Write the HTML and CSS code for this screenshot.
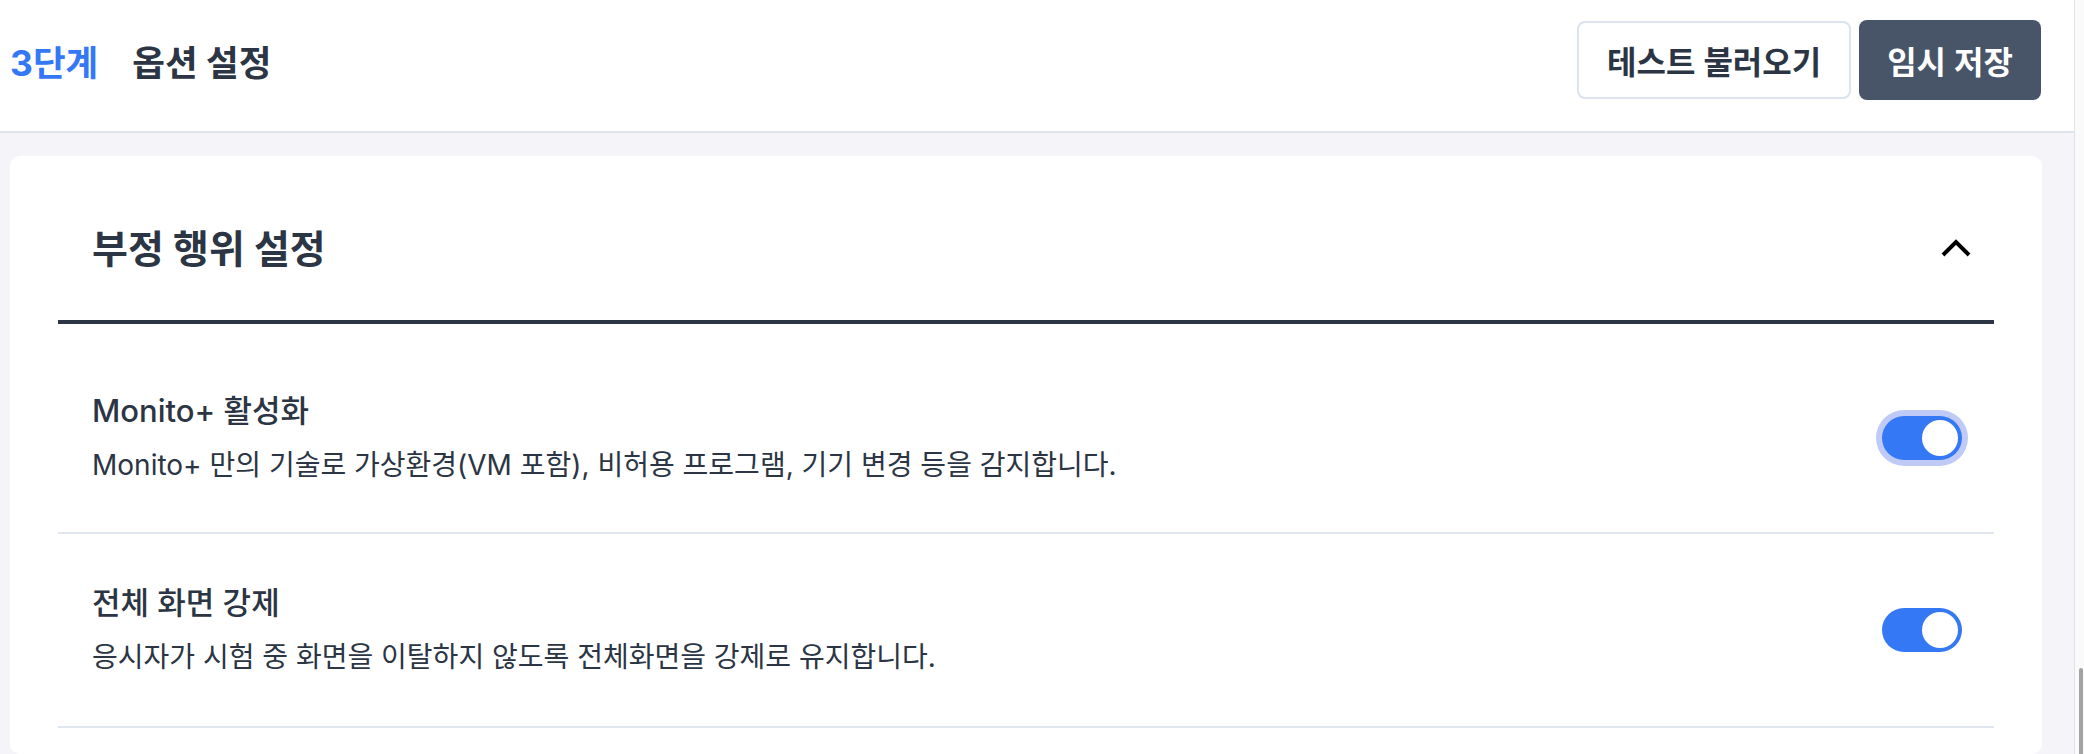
FILE: index.html
```html
<!DOCTYPE html>
<html lang="ko">
<head>
<meta charset="utf-8">
<title>옵션 설정</title>
<link rel="stylesheet" href="styles.css">
</head>
<body>
<div class="app">
  <div class="main">
    <header class="topbar">
      <div class="step">
        <span class="step-num">3단계</span>
        <span class="step-name">옵션 설정</span>
      </div>
      <div class="actions">
        <button class="btn btn-outline">테스트 불러오기</button>
        <button class="btn btn-dark">임시 저장</button>
      </div>
    </header>
    <section class="card">
      <div class="card-head">
        <h2 class="card-title">부정 행위 설정</h2>
        <svg class="chevron" width="30" height="20" viewBox="0 0 30 20"><polyline points="2,17 15,4 28,17" fill="none" stroke="#000" stroke-width="4"/></svg>
      </div>
      <div class="row row-first">
        <div class="row-text">
          <div class="row-title">Monito+ 활성화</div>
          <div class="row-desc">Monito+ 만의 기술로 가상환경(VM 포함), 비허용 프로그램, 기기 변경 등을 감지합니다.</div>
        </div>
        <span class="toggle toggle-focus"><span class="knob"></span></span>
      </div>
      <div class="row">
        <div class="row-text">
          <div class="row-title">전체 화면 강제</div>
          <div class="row-desc">응시자가 시험 중 화면을 이탈하지 않도록 전체화면을 강제로 유지합니다.</div>
        </div>
        <span class="toggle"><span class="knob"></span></span>
      </div>
    </section>
  </div>
  <div class="scrollstrip"><span class="thumb"></span></div>
</div>
</body>
</html>
```

FILE: styles.css
```css
* { box-sizing: border-box; }
html, body { margin: 0; padding: 0; }
body {
  width: 2084px;
  height: 754px;
  overflow: hidden;
  font-family: Inter, "Noto Sans CJK KR", sans-serif;
  color: #2b3544;
  background: #f5f5f9;
}
.app { display: flex; height: 754px; }
.main { flex: 1; display: flex; flex-direction: column; min-width: 0; }
.scrollstrip {
  width: 10px;
  border-left: 1px solid #e3e3e6;
  background: #fafafa;
  position: relative;
}
.thumb {
  position: absolute;
  right: 1px;
  top: 668px;
  width: 4px;
  height: 120px;
  border-radius: 3px;
  background: #a3a3a3;
}
.topbar {
  height: 133px;
  background: #fff;
  border-bottom: 2px solid #dfe5ec;
  display: flex;
  align-items: center;
  justify-content: space-between;
  padding: 0 33px 10px 10px;
}
.step { display: flex; align-items: center; gap: 34px; font-size: 35.5px; font-weight: 700; }
.step-num { color: #3478f6; }
.step-name { color: #2b3544; }
.actions { display: flex; gap: 8px; }
.btn {
  height: 78px;
  padding: 0 28px;
  border-radius: 8px;
  font-family: inherit;
  font-size: 32px;
  font-weight: 600;
  cursor: pointer;
}
.btn-outline { background: #fff; border: 2px solid #dbe3ec; color: #2b3544; }
.btn-dark { background: #485569; border: 0; color: #fff; height: 80px; margin-top: -1px; }
.card {
  margin: 23px 32px 0 10px;
  background: #fff;
  border-radius: 10px;
  padding: 0 48px;
  flex: 1;
}
.card-head {
  height: 168px;
  padding: 16px 23px 0 34px;
  display: flex;
  align-items: center;
  justify-content: space-between;
  border-bottom: 4px solid #2b3544;
}
.card-title { margin: 0; font-size: 39px; font-weight: 700; }
.chevron { display: block; margin-top: 4px; }
.row {
  height: 194px;
  display: flex;
  align-items: center;
  justify-content: space-between;
  padding: 0 32px 0 34px;
  border-bottom: 2px solid #dfe6ee;
}
.row-first { height: 210px; padding-top: 20px; }
.row-title { font-size: 31px; font-weight: 500; line-height: 38px; }
.row-desc { font-size: 28px; font-weight: 400; line-height: 38px; margin-top: 16px; }
.toggle {
  width: 80px;
  height: 44px;
  border-radius: 22px;
  background: #3478f6;
  display: flex;
  align-items: center;
  justify-content: flex-end;
  padding: 0 4px;
  flex-shrink: 0;
}
.toggle-focus { box-shadow: 0 0 0 6px #bfcbf6; }
.knob { width: 36px; height: 36px; border-radius: 50%; background: #fff; }
```
